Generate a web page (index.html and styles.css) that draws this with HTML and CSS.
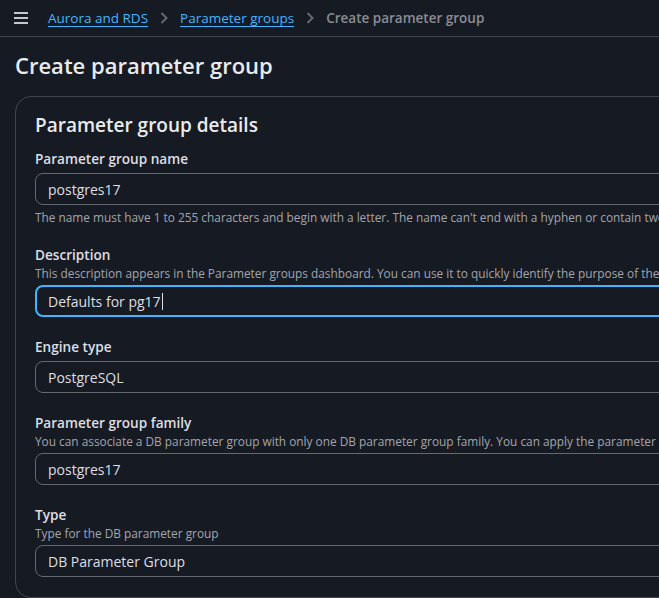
FILE: index.html
```html
<!DOCTYPE html>
<html lang="en">
<head>
<meta charset="utf-8">
<title>Create parameter group</title>
<link rel="stylesheet" href="styles.css">
</head>
<body>
<header class="topbar">
  <svg class="menu" width="14" height="12" viewBox="0 0 14 12" aria-hidden="true">
    <path d="M0 1h14M0 6h14M0 11h14" stroke="#c6c6cd" stroke-width="2" fill="none"/>
  </svg>
  <nav class="crumbs">
    <a class="crumb-link" href="#">Aurora and RDS</a>
    <svg class="chev" width="8" height="12" viewBox="0 0 8 12" aria-hidden="true"><path d="M1.5 1l5 5-5 5" stroke="#656871" stroke-width="2" fill="none"/></svg>
    <a class="crumb-link" href="#">Parameter groups</a>
    <svg class="chev" width="8" height="12" viewBox="0 0 8 12" aria-hidden="true"><path d="M1.5 1l5 5-5 5" stroke="#656871" stroke-width="2" fill="none"/></svg>
    <span class="crumb-current">Create parameter group</span>
  </nav>
</header>
<main class="main">
  <h1 class="page-title">Create parameter group</h1>
  <section class="card">
    <h2 class="card-title">Parameter group details</h2>
    <div class="field first">
      <div class="label">Parameter group name</div>
      <div class="input">postgres17</div>
      <div class="help">The name must have 1 to 255 characters and begin with a letter. The name can't end with a hyphen or contain two consecutive hyphens.</div>
    </div>
    <div class="field">
      <div class="label">Description</div>
      <div class="desc">This description appears in the Parameter groups dashboard. You can use it to quickly identify the purpose of the parameter group.</div>
      <div class="input focused">Defaults for pg17<span class="caret"></span></div>
    </div>
    <div class="field">
      <div class="label">Engine type</div>
      <div class="input">PostgreSQL</div>
    </div>
    <div class="field">
      <div class="label">Parameter group family</div>
      <div class="desc">You can associate a DB parameter group with only one DB parameter group family. You can apply the parameter group only to DB instances of that family.</div>
      <div class="input">postgres17</div>
    </div>
    <div class="field">
      <div class="label">Type</div>
      <div class="desc">Type for the DB parameter group</div>
      <div class="input">DB Parameter Group</div>
    </div>
  </section>
</main>
</body>
</html>
```
FILE: styles.css
```css
html, body {
  margin: 0;
  padding: 0;
  background: #161b23;
  overflow: hidden;
}
body {
  font-family: "Open Sans", "Noto Sans", sans-serif;
  color: #dedee3;
  width: 659px;
  height: 598px;
}
.topbar {
  height: 36px;
  border-bottom: 1px solid #414650;
  display: flex;
  align-items: center;
  padding-left: 14px;
  white-space: nowrap;
}
.menu {
  display: block;
  margin-right: 20px;
}
.crumbs {
  display: flex;
  align-items: center;
  font-size: 13.5px;
  line-height: 20px;
}
.crumb-link {
  color: #42b4ff;
  text-decoration: underline;
  text-underline-offset: 3px;
  text-decoration-thickness: 1px;
}
.chev {
  display: block;
  margin: 0 12px 0 12px;
}
.crumb-current {
  color: #8c8c94;
  font-weight: 600;
}
.main {
  padding: 0 0 0 15px;
}
.page-title {
  margin: 13px 0 16px;
  font-size: 22px;
  line-height: 30px;
  font-weight: 600;
  color: #e9ebed;
}
.card {
  width: 900px;
  border: 1px solid #414650;
  border-radius: 16px;
  padding: 16px 19px 20px;
  box-sizing: border-box;
}
.card-title {
  margin: 0;
  font-size: 19px;
  line-height: 24px;
  font-weight: 600;
  color: #e9ebed;
}
.field {
  margin-top: 20px;
}
.field.first {
  margin-top: 12px;
}
.label {
  font-size: 13.6px;
  line-height: 20px;
  font-weight: 600;
  color: #dedee3;
  white-space: nowrap;
}
.desc, .help {
  font-size: 11.85px;
  line-height: 16px;
  color: #a4a4ad;
  white-space: nowrap;
}
.help {
  margin-top: 4px;
}
.input {
  margin-top: 4px;
  height: 32px;
  box-sizing: border-box;
  border: 1px solid #656871;
  border-radius: 8px;
  padding: 0 12px;
  display: flex;
  align-items: center;
  font-size: 14px;
  color: #dedee3;
}
.input.focused {
  border: 2px solid #42b4ff;
  padding-left: 11px;
}
.caret {
  display: inline-block;
  width: 1px;
  height: 17px;
  background: #dedee3;
  margin-left: 1px;
}
```
